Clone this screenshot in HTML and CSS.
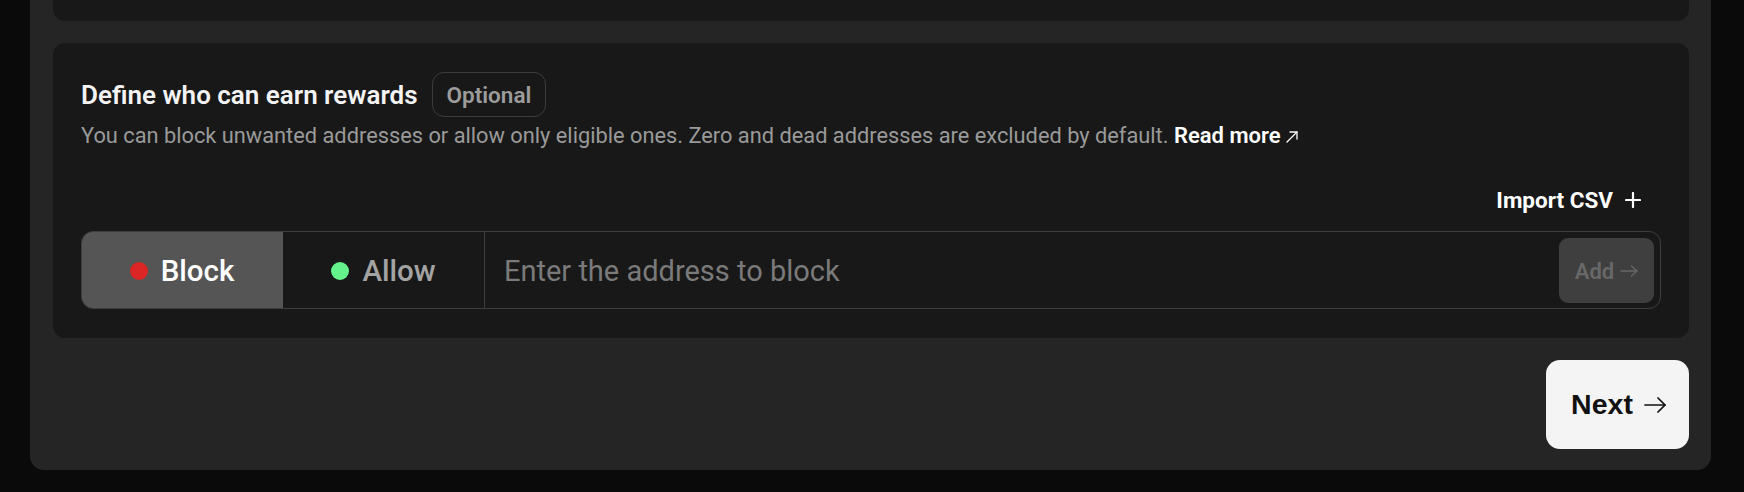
FILE: index.html
```html
<!DOCTYPE html>
<html lang="en">
<head>
<meta charset="utf-8">
<title>Define who can earn rewards</title>
<link rel="stylesheet" href="styles.css">
</head>
<body>
<div class="panel">
  <div class="card card-prev"></div>
  <section class="card card-rules">
    <div class="title-row">
      <h2 class="title">Define who can earn rewards</h2>
      <span class="badge">Optional</span>
    </div>
    <p class="desc">You can block unwanted addresses or allow only eligible ones. Zero and dead addresses are excluded by default. <a class="read-more" href="#">Read more<svg class="ext-icon" width="12" height="12" viewBox="0 0 12 12" fill="none" stroke="currentColor" stroke-width="1.3" stroke-linecap="round" stroke-linejoin="round"><path d="M1 11L11 1"/><path d="M4 1h7v7"/></svg></a></p>
    <div class="import-row">
      <button class="import-btn" type="button">Import CSV<svg class="plus-icon" width="16" height="16" viewBox="0 0 16 16" fill="none" stroke="currentColor" stroke-width="2.2" stroke-linecap="round"><path d="M8 1v14"/><path d="M1 8h14"/></svg></button>
    </div>
    <div class="address-box">
      <button class="seg seg-active" type="button"><span class="dot dot-red"></span>Block</button>
      <button class="seg" type="button"><span class="dot dot-green"></span>Allow</button>
      <input class="address-input" type="text" placeholder="Enter the address to block">
      <button class="add-btn" type="button">Add<svg class="add-arrow" width="18" height="12" viewBox="0 0 18 12" fill="none" stroke="currentColor" stroke-width="1.3" stroke-linecap="round" stroke-linejoin="round"><path d="M1 6h16"/><path d="M11.5 1L17 6l-5.5 5"/></svg></button>
    </div>
  </section>
  <div class="footer">
    <button class="next-btn" type="button">Next<svg class="next-arrow" width="22" height="16" viewBox="0 0 22 16" fill="none" stroke="currentColor" stroke-width="1.7" stroke-linecap="round" stroke-linejoin="round"><path d="M1 8h20"/><path d="M14 1l7 7-7 7"/></svg></button>
  </div>
</div>
</body>
</html>
```
FILE: styles.css
```css
* { box-sizing: border-box; }

html, body {
  margin: 0;
  padding: 0;
  background: #0a0a0a;
  height: 492px;
  overflow: hidden;
}

body {
  font-family: Roboto, "Liberation Sans", sans-serif;
  color: #f2f2f2;
}

.panel {
  margin-left: 30px;
  width: 1681px;
  height: 470px;
  background: #252525;
  border-radius: 0 0 14px 14px;
  padding: 0 22px 21px 23px;
  display: flex;
  flex-direction: column;
  gap: 22px;
}

.card {
  background: #181818;
  border-radius: 12px;
}

.card-prev {
  height: 21px;
  border-radius: 0 0 12px 12px;
}

.card-rules {
  padding: 29px 28px;
  display: flex;
  flex-direction: column;
}

.title-row {
  display: flex;
  align-items: center;
  gap: 14px;
  height: 45px;
}

.title {
  margin: 0;
  font-size: 26px;
  font-weight: 600;
  color: #f3f3f3;
  line-height: 30px;
}

.badge {
  height: 45px;
  display: flex;
  align-items: center;
  padding: 0 14px;
  border: 1px solid #3c3c3c;
  border-radius: 12px;
  font-size: 22.5px;
  font-weight: 600;
  color: #9c9c9c;
}

.desc {
  margin: 4px 0 0;
  font-size: 21.8px;
  line-height: 29px;
  color: #9a9a9a;
}

.read-more {
  color: #ffffff;
  font-weight: 600;
  text-decoration: none;
  font-size: 22px;
}

.ext-icon {
  margin-left: 5px;
  vertical-align: 0;
}

.import-row {
  margin-top: 35px;
  display: flex;
  justify-content: flex-end;
  padding-right: 20px;
  height: 28px;
}

.import-btn {
  background: none;
  border: 0;
  padding: 1px 0 0;
  font-family: inherit;
  font-size: 22.5px;
  font-weight: 700;
  line-height: 28px;
  color: #ffffff;
  display: flex;
  align-items: center;
  gap: 12px;
}

.address-box {
  margin-top: 18px;
  height: 78px;
  border: 1px solid #3e3e3e;
  border-radius: 12px;
  overflow: hidden;
  display: flex;
  align-items: stretch;
}

.seg {
  width: 201px;
  flex: none;
  display: flex;
  align-items: center;
  justify-content: center;
  gap: 13px;
  background: transparent;
  border: 0;
  border-right: 1px solid #3e3e3e;
  padding: 2px 0 0;
  font-family: inherit;
  font-size: 29.5px;
  font-weight: 500;
  color: #a3a3a3;
}

.seg + .seg {
  width: 202px;
}

.seg-active {
  background: #555555;
  color: #ffffff;
  border-right-color: #555555;
}

.dot {
  width: 18px;
  height: 18px;
  border-radius: 50%;
  flex: none;
}

.dot-red { background: #dc2626; }
.dot-green { background: #64f28c; }

.address-input {
  flex: 1;
  min-width: 0;
  background: transparent;
  border: 0;
  outline: none;
  padding: 2px 0 0 19px;
  font-family: inherit;
  font-size: 29px;
  font-weight: 400;
  color: #e5e5e5;
}

.address-input::placeholder {
  color: #7a7a7a;
}

.add-btn {
  flex: none;
  align-self: center;
  margin-right: 6px;
  width: 95px;
  height: 65px;
  border: 0;
  border-radius: 9px;
  background: #3f3f3f;
  color: #686868;
  font-family: inherit;
  font-size: 22px;
  font-weight: 600;
  display: flex;
  align-items: center;
  justify-content: center;
  gap: 6px;
  padding: 2px 0 0;
}

.footer {
  display: flex;
  justify-content: flex-end;
}

.next-btn {
  width: 143px;
  height: 89px;
  border: 0;
  border-radius: 14px;
  background: #f4f4f4;
  color: #111111;
  font-family: "Liberation Sans", Arial, sans-serif;
  font-size: 28.5px;
  font-weight: 700;
  display: flex;
  align-items: center;
  justify-content: center;
  gap: 11px;
  padding: 0 0 0 2px;
}
```
